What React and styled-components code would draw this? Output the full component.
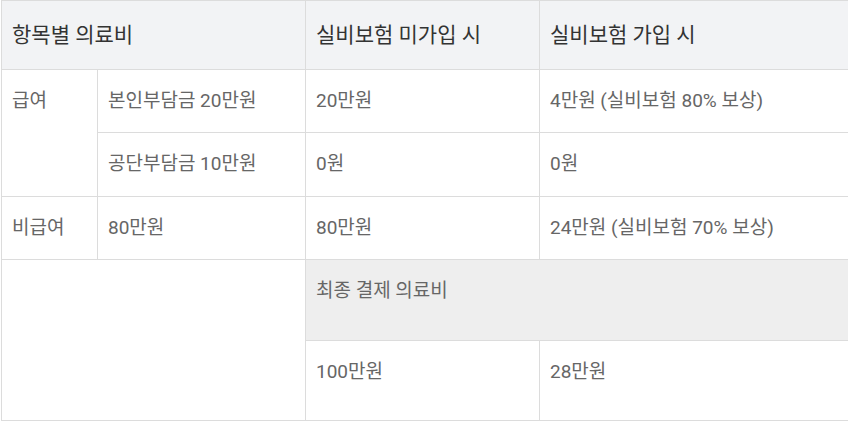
import React from "react";
import styled, { createGlobalStyle } from "styled-components";

const GlobalStyle = createGlobalStyle`
  html, body {
    margin: 0;
    padding: 0;
    background: #ffffff;
  }
  body {
    font-family: Roboto, "Noto Sans CJK KR", sans-serif;
    overflow: hidden;
  }
`;

const rows = [
  { group: "급여", span: 2, item: "본인부담금 20만원", without: "20만원", with: "4만원 (실비보험 80% 보상)", h: 63 },
  { item: "공단부담금 10만원", without: "0원", with: "0원", h: 64 },
  { group: "비급여", span: 1, item: "80만원", without: "80만원", with: "24만원 (실비보험 70% 보상)", h: 63 },
];

const App = () => {
  return (
    <>
      <GlobalStyle />
      <Wrapper>
        <Table>
          <colgroup>
            <col style={{ width: 96 }} />
            <col style={{ width: 208 }} />
            <col style={{ width: 234 }} />
            <col style={{ width: 330 }} />
          </colgroup>
          <thead>
            <Row $h={69}>
              <HeadCell colSpan={2}>항목별 의료비</HeadCell>
              <HeadCell>실비보험 미가입 시</HeadCell>
              <HeadCell>실비보험 가입 시</HeadCell>
            </Row>
          </thead>
          <tbody>
            {rows.map((r) => (
              <Row key={r.item} $h={r.h}>
                {r.group && <Cell rowSpan={r.span}>{r.group}</Cell>}
                <Cell>{r.item}</Cell>
                <Cell>{r.without}</Cell>
                <Cell>{r.with}</Cell>
              </Row>
            ))}
            <Row $h={81}>
              <Cell colSpan={2} rowSpan={2} />
              <Cell colSpan={2} $shaded>
                최종 결제 의료비
              </Cell>
            </Row>
            <Row $h={80}>
              <Cell>100만원</Cell>
              <Cell>28만원</Cell>
            </Row>
          </tbody>
        </Table>
      </Wrapper>
    </>
  );
};

const Wrapper = styled.div`
  width: 848px;
  height: 421px;
  padding-left: 1px;
  box-sizing: border-box;
  overflow: hidden;
`;

const Table = styled.table`
  width: 868px;
  table-layout: fixed;
  border-collapse: separate;
  border-spacing: 0;
  border-bottom: 1px solid #dcdcdc;
`;

const Row = styled.tr`
  height: ${(p) => p.$h}px;
`;

const HeadCell = styled.th`
  box-sizing: border-box;
  padding: 19px 10px 0;
  border-top: 1px solid #dcdcdc;
  border-left: 1px solid #dcdcdc;
  background: #f2f3f5;
  color: #333333;
  font-size: 21px;
  font-weight: 400;
  line-height: 30px;
  text-align: left;
  vertical-align: top;
  white-space: nowrap;
`;

const Cell = styled.td`
  box-sizing: border-box;
  padding: 19px 10px 0;
  border-top: 1px solid #dcdcdc;
  border-left: 1px solid #dcdcdc;
  background: ${(p) => (p.$shaded ? "#eeeeee" : "#ffffff")};
  color: #666666;
  font-size: 19px;
  line-height: 24px;
  text-align: left;
  vertical-align: top;
  white-space: nowrap;
`;

export default App;
